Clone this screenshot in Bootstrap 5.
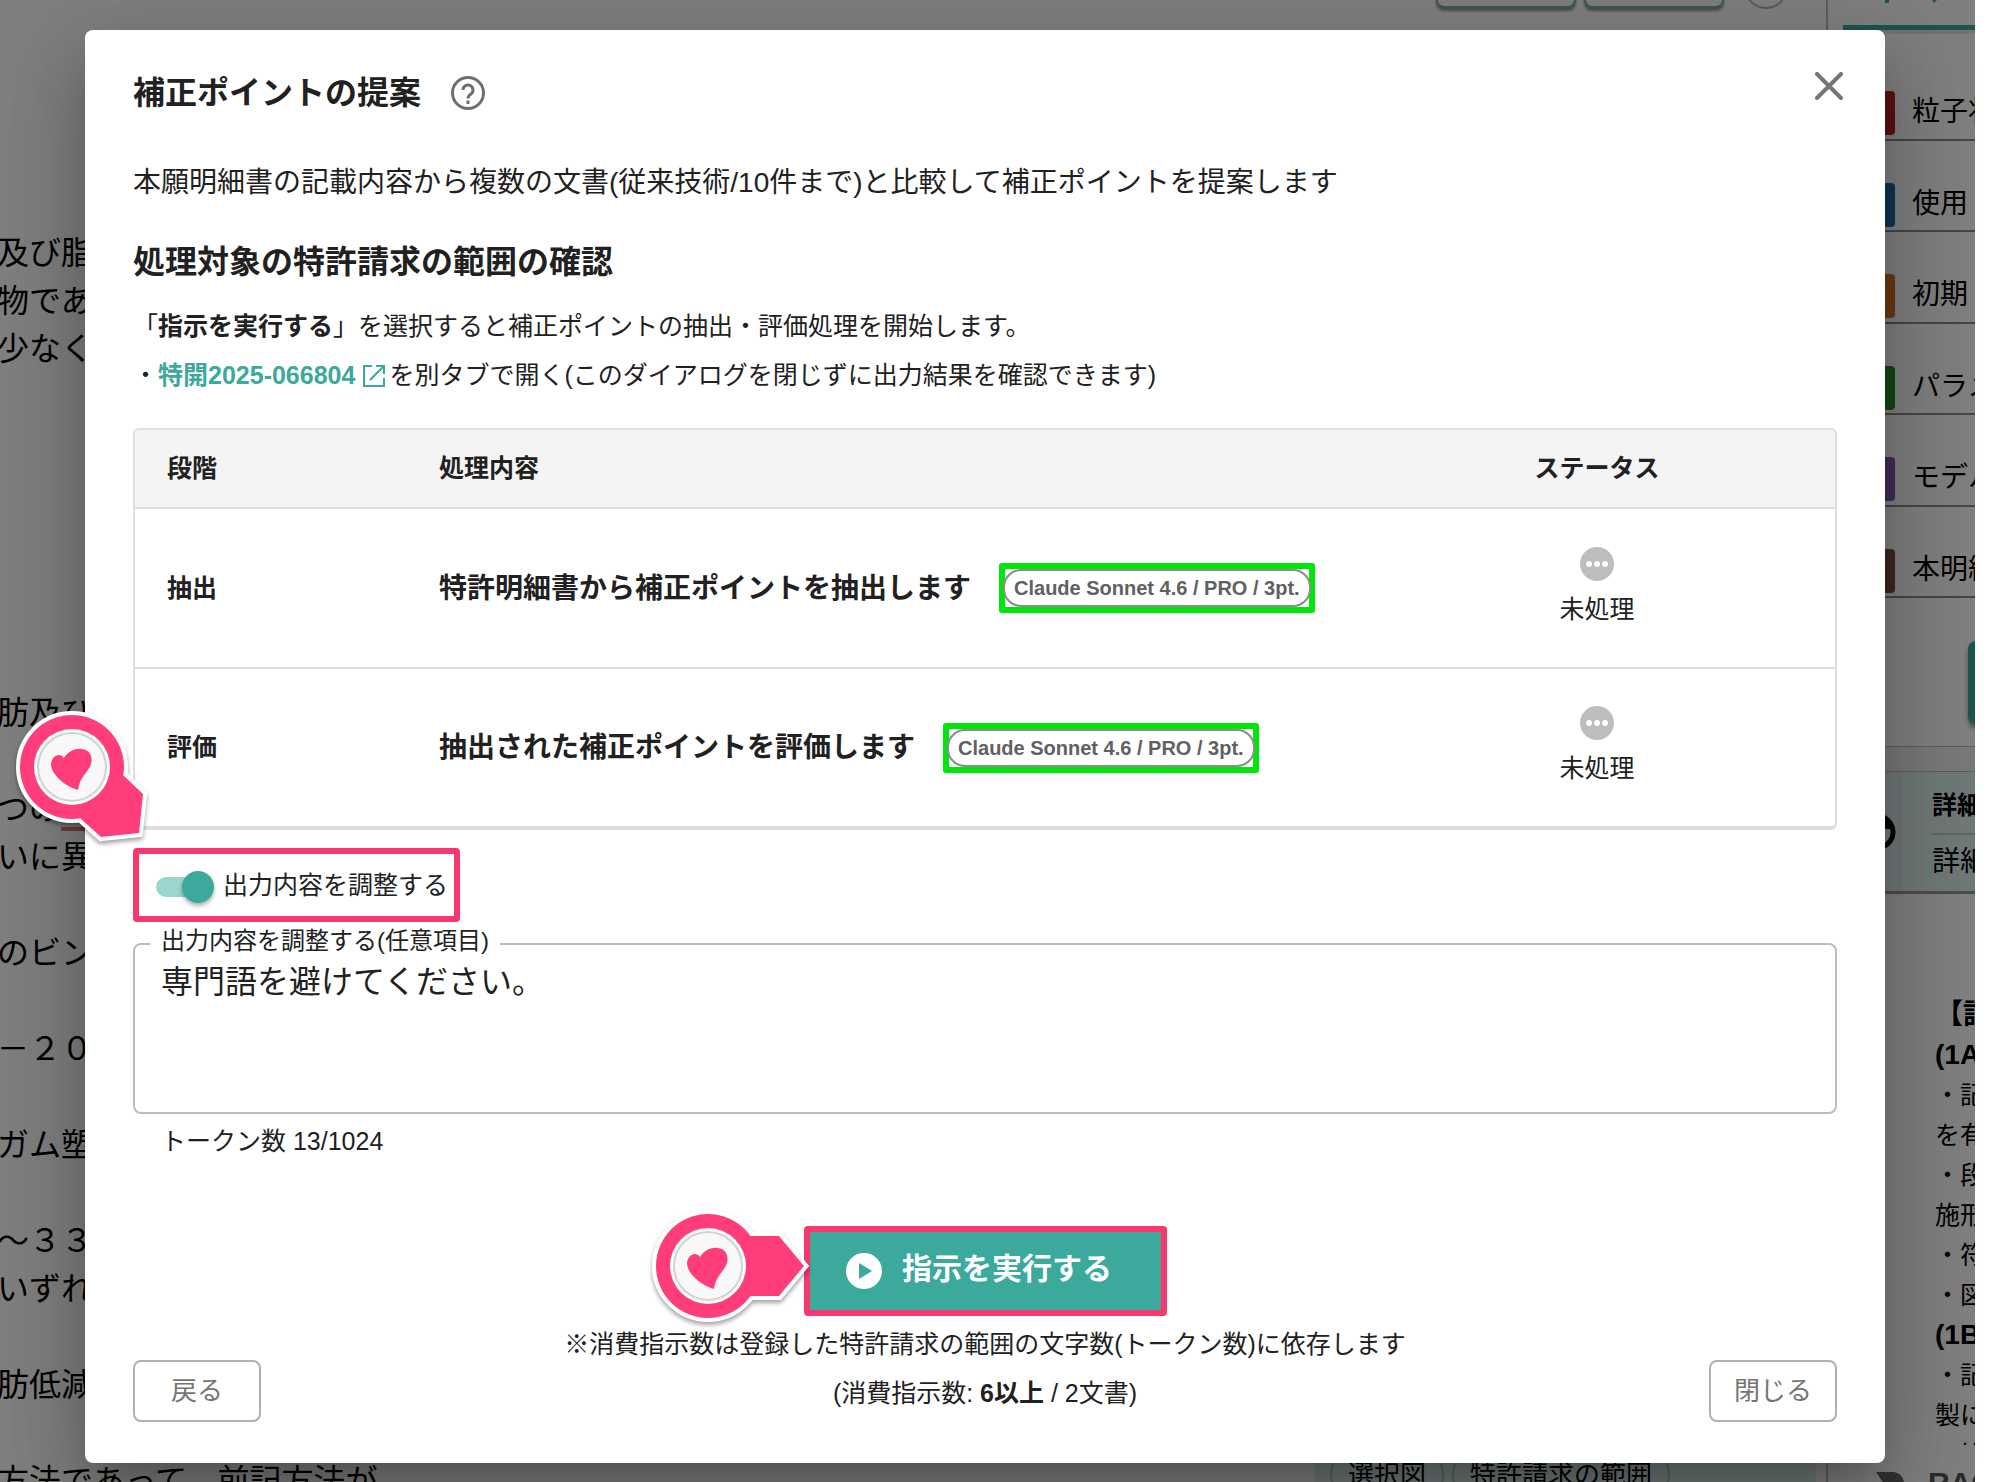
<!DOCTYPE html>
<html lang="ja">
<head>
<meta charset="utf-8">
<meta name="viewport" content="width=device-width, initial-scale=1">
<title>補正ポイントの提案</title>
<link rel="stylesheet" href="https://cdn.jsdelivr.net/npm/bootstrap@5.3.0/dist/css/bootstrap.min.css">
<style>
:root { --teal: #3ba99c; --pink: #f8376f; --green: #00e60a; --ink: #212121; --line: #dedede; }
body { background: #fff; color: var(--ink); font-family: "Liberation Sans", "Noto Sans CJK JP", sans-serif; font-size: 25px; line-height: 49px; }
.app-shell { height: 100vh; margin-right: 41px; background: #fff; color: #000; }
.toolbar { height: 30px; padding-right: 38px; }
.tool-btn { width: 140px; height: 38px; margin-top: -30px; border: 2px solid #6fb5ac; border-radius: 8px; background: #fff; box-shadow: 0 3px 3px rgba(0,0,0,.4); }
.tool-round { width: 44px; height: 44px; margin: -35px 0 0 12px; border: 2px solid #b0b0b0; border-radius: 50%; background: #fff; }
.doc-text { font-size: 32px; line-height: 48px; padding-top: 199px; white-space: nowrap; }
.doc-text p { margin: 0 0 0 -3px; }
.gap-s { margin-top: 48px !important; }
.gap-m { margin-top: 316px !important; }
.red-line { border-bottom: 4px solid #d98080; }
.tag-panel { width: 502px; height: 52px; margin: 0 10px -19px 0; padding: 0 16px; background: #dff2f0; }
.tag-pill { font-size: 26px; line-height: 48px; border: 2px solid #b8c4c3; border-radius: 26px; padding: 0 16px; white-space: nowrap; }
.side-pane { width: 149px; border-left: 2px solid #bbb; white-space: nowrap; }
.tab-head { height: 34px; margin-left: 15px; border-bottom: 4px solid #e4e4e8; }
.tab-head div { height: 30px; border-bottom: 5px solid var(--teal); }
.key-list { height: 564px; padding-top: 15px; }
.key-row { border-bottom: 2px solid #8a8a8a; font-size: 28px; }
.key-row i { width: 24px; height: 44px; margin: 42px 17px 0 43px; border-radius: 4px; flex-shrink: 0; }
.key-row span { padding-top: 38px; }
.side-action { width: 60px; height: 83px; margin: 43px 0 22px 140px; border-radius: 8px; background: var(--teal); box-shadow: 0 4px 5px rgba(0,0,0,.4); }
.side-band { height: 25px; border-top: 1px solid #bbb; background: #f3f3f3; }
.side-card { height: 123px; border-top: 1px solid #bbb; border-bottom: 3px solid #999; background: #dff2f0; padding-left: 30px; }
.side-card b { font-size: 25px; line-height: 56px; padding-top: 2px; border-bottom: 2px solid #bcc8c6; }
.side-card span { font-size: 28px; line-height: 54px; }
.side-note { height: 551px; margin-left: 107px; padding-top: 101px; line-height: 40px; }
.side-note b { font-size: 28px; }
.side-foot { color: #555; font-size: 30px; line-height: 30px; padding: 23px 0 0 48px; }
.scrim { inset: 0 41px 0 0; padding: 30px 90px 20px 85px; background: rgba(0,0,0,.5); }
.dialog-box { background: #fff; border-radius: 8px; padding: 39px 48px 41px; box-shadow: 0 22px 30px -14px rgba(0,0,0,.2), 0 48px 76px 6px rgba(0,0,0,.14), 0 18px 92px 16px rgba(0,0,0,.12); }
.dialog-box h1, .dialog-box h2 { font-size: 32px; line-height: 48px; font-weight: 700; margin: 0; }
.intro { font-size: 28px; line-height: 48px; margin: 42px 0 31px; }
.x-btn { right: 42px; top: 42px; line-height: 0; }
.doc-link { color: var(--teal); font-weight: 700; text-decoration: none; }
.step-card { border: 2px solid var(--line); border-bottom-width: 4px; border-radius: 6px; }
.step-table { table-layout: fixed; color: var(--ink); --bs-table-bg: transparent; }
.step-table th, .step-table td { padding: 0 32px; vertical-align: middle; border-bottom: 2px solid var(--line); }
.step-table thead th { height: 78px; background: #f4f4f4; }
.step-table tbody tr > * { height: 160px; }
.step-table tbody tr:last-child > * { border-bottom: 0; height: 158px; }
.step-name { font-size: 28px; font-weight: 700; }
.mark-green { border: 6px solid var(--green); border-radius: 3px; margin-left: 28px; }
.model-chip { border: 2px solid #8c8c8c; border-radius: 18px; margin: 0 -2px; padding: 0 9px; font-size: 20px; line-height: 34px; font-weight: 700; color: #616161; white-space: nowrap; }
.mark-pink { border: 6px solid var(--pink); border-radius: 4px; }
.switch-box { height: 74px; margin-top: 18px; padding: 0 6px 0 17px; }
.slide-switch { appearance: none; width: 58px; height: 32px; margin: 4px 9px 0 0; background: linear-gradient(#9dd4cd, #9dd4cd) 0 50% / 46px 20px no-repeat; border-radius: 16px; position: relative; }
.slide-switch::before { content: ""; position: absolute; left: 0; top: 6px; width: 46px; height: 20px; border-radius: 10px; background: #9dd4cd; }
.slide-switch { background: none; }
.slide-switch::after { content: ""; position: absolute; right: 0; top: 0; width: 32px; height: 32px; border-radius: 50%; background: var(--teal); box-shadow: 0 3px 4px rgba(0,0,0,.3); }
.note-field { margin-top: 21px; }
.note-field label { left: 17px; top: -16px; padding: 0 11px; background: #fff; font-size: 24px; line-height: 28px; }
.note-field textarea { height: 171px; border: 2px solid #bdbdbd; border-radius: 8px; padding: 14px 26px; font-size: 32px; line-height: 46px; color: var(--ink); resize: none; }
.helper { margin: 3px 28px 60px; }
.run-btn { height: 78px; width: 351px; border: 0; border-radius: 0; background: var(--teal); color: #fff; font-size: 30px; font-weight: 700; line-height: 48px; }
.plain-btn { width: 128px; height: 62px; border: 2px solid #b0b0b0; border-radius: 8px; background: #fff; color: #757575; font-size: 26px; padding: 0; line-height: 48px; }
.pin { pointer-events: none; filter: drop-shadow(0 3px 2px rgba(0,0,0,.35)); }
.pin-switch { left: -127px; top: -147px; }
.pin-run { left: -162px; top: -26px; }
</style>
<script src="https://cdn.jsdelivr.net/npm/bootstrap@5.3.0/dist/js/bootstrap.bundle.min.js"></script>
</head>
<body>
<svg width="0" height="0" class="position-absolute" aria-hidden="true">
  <defs>
    <g id="pin-face">
      <circle cx="60" cy="60" r="38" fill="#fff"/>
      <circle cx="60" cy="60" r="34" fill="#f8f8f8" stroke="#d2d2d2" stroke-width="2"/>
      <path d="M66 83C55 80 40 69 39 58C39 51 45 46 50 49C52 50 52 52 51 53C54 46 62 41 70 42C78 43 81 50 79 57C76 66 68 69 66 83Z" fill="#ff3d7a"/>
    </g>
    <g id="more-dot">
      <circle cx="17" cy="17" r="17" fill="#bdbdbd"/>
      <g fill="#fff"><circle cx="9" cy="17" r="3"/><circle cx="17" cy="17" r="3"/><circle cx="25" cy="17" r="3"/></g>
    </g>
  </defs>
</svg>

<div class="app-shell d-flex overflow-hidden" aria-hidden="true">
  <main class="d-flex flex-column flex-grow-1 overflow-hidden">
    <div class="toolbar d-flex justify-content-end gap-2 flex-shrink-0">
      <div class="tool-btn"></div><div class="tool-btn"></div><div class="tool-round"></div>
    </div>
    <div class="d-flex flex-grow-1 overflow-hidden">
      <article class="doc-text flex-grow-1">
        <p>及び脂</p><p>物であ</p><p>少なく</p>
        <p class="gap-m">肪及び</p>
        <p class="gap-s">つの<span class="red-line">油</span></p><p>いに異</p>
        <p class="gap-s">のビン</p>
        <p class="gap-s">－２０</p>
        <p class="gap-s">ガム塑</p>
        <p class="gap-s">～３３</p><p>いずれ</p>
        <p class="gap-s">肪低減</p>
        <p class="gap-s">方法であって、前記方法が</p>
      </article>
      <div class="tag-panel d-flex align-items-center align-self-end gap-2 flex-shrink-0">
        <span class="tag-pill">選択図</span><span class="tag-pill">特許請求の範囲</span>
      </div>
    </div>
  </main>
  <aside class="side-pane flex-shrink-0 overflow-hidden">
    <div class="tab-head"><div><svg class="d-block" width="110" height="4"><path d="M42 0h4v3h-4zM89 0h5l-3 3z" fill="#3ba99c"/></svg></div></div>
    <div class="key-list d-flex flex-column">
      <div class="key-row d-flex flex-fill"><i style="background:#b9252d"></i><span>粒子状</span></div>
      <div class="key-row d-flex flex-fill"><i style="background:#1f6ba5"></i><span>使用</span></div>
      <div class="key-row d-flex flex-fill"><i style="background:#d9701a"></i><span>初期</span></div>
      <div class="key-row d-flex flex-fill"><i style="background:#2a902a"></i><span>パラメ</span></div>
      <div class="key-row d-flex flex-fill"><i style="background:#8558b0"></i><span>モデル</span></div>
      <div class="key-row d-flex flex-fill"><i style="background:#7e4c42"></i><span>本明細</span></div>
    </div>
    <div class="side-action"></div>
    <div class="side-band"></div>
    <div class="side-card d-flex align-items-center">
      <svg class="flex-shrink-0 me-4" width="38" height="38"><circle cx="19" cy="19" r="16" fill="none" stroke="#000" stroke-width="5"/><path d="M4 16A16 16 0 0 1 34 16Z"/></svg>
      <div class="d-flex flex-column ms-2 ps-1"><b>詳細な</b><span>詳細な</span></div>
    </div>
    <div class="side-note overflow-hidden">
      <div><b>【記</b></div><div><b>(1A)</b></div>
      <div>・記載</div><div>を有す</div><div>・段落</div><div>施形態</div><div>・符号</div><div>・図面</div>
      <div><b>(1B)</b></div><div>・記載</div><div>製に係</div><div>・符号</div>
    </div>
    <div class="side-foot d-flex"><svg width="28" height="30" class="me-4 flex-shrink-0"><path d="M0 4h18q10 2 10 12v14H8V16Z" fill="#666"/></svg><b>RAG</b></div>
  </aside>
</div>

<div class="scrim position-absolute">
  <section class="dialog-box position-relative" role="dialog" aria-labelledby="dlg-title">
    <button type="button" class="x-btn btn p-0 border-0 position-absolute" aria-label="閉じる">
      <svg width="28" height="28" viewBox="0 0 28 28" stroke="#757575" stroke-width="4" stroke-linecap="round"><path d="M2 2L26 26M26 2L2 26"/></svg>
    </button>
    <div class="d-flex align-items-center">
      <h1 id="dlg-title">補正ポイントの提案</h1>
      <svg class="ms-4 ps-1" width="42" height="38" viewBox="0 0 38 38" fill="none" stroke="#6f6f6f" stroke-width="3"><circle cx="19" cy="19" r="15.5"/><path d="M14 16A5 5 0 1 1 22 20Q19 22 19 24.500"/><path d="M19 26.500v3.500"/></svg>
    </div>
    <p class="intro">本願明細書の記載内容から複数の文書(従来技術/10件まで)と比較して補正ポイントを提案します</p>
    <h2>処理対象の特許請求の範囲の確認</h2>
    <div class="mt-3">「<b>指示を実行する</b>」を選択すると補正ポイントの抽出・評価処理を開始します。</div>
    <div class="d-flex align-items-center mb-4 pb-1">
      <span>・</span>
      <a class="doc-link d-flex align-items-center" href="#">特開2025-066804
        <svg class="ms-2 me-1" width="22" height="22" viewBox="0 0 22 22" fill="none" stroke="#3ba99c" stroke-width="2"><path d="M9 1H1V21H21V13M13 1H21V9M21 1L7 15"/></svg></a>
      <span>を別タブで開く(このダイアログを閉じずに出力結果を確認できます)</span>
    </div>

    <div class="step-card overflow-hidden">
      <table class="step-table table mb-0">
        <colgroup><col style="width:16%"><col style="width:56%"><col style="width:28%"></colgroup>
        <thead><tr><th scope="col">段階</th><th scope="col">処理内容</th><th scope="col" class="text-center">ステータス</th></tr></thead>
        <tbody>
          <tr>
            <th scope="row">抽出</th>
            <td><div class="d-flex align-items-center"><span class="step-name">特許明細書から補正ポイントを抽出します</span><span class="mark-green d-flex"><span class="model-chip">Claude Sonnet 4.6 / PRO / 3pt.</span></span></div></td>
            <td><div class="d-flex flex-column align-items-center"><svg width="34" height="34" class="my-1"><use href="#more-dot"/></svg><span>未処理</span></div></td>
          </tr>
          <tr>
            <th scope="row">評価</th>
            <td><div class="d-flex align-items-center"><span class="step-name">抽出された補正ポイントを評価します</span><span class="mark-green d-flex"><span class="model-chip">Claude Sonnet 4.6 / PRO / 3pt.</span></span></div></td>
            <td><div class="d-flex flex-column align-items-center"><svg width="34" height="34" class="my-1"><use href="#more-dot"/></svg><span>未処理</span></div></td>
          </tr>
        </tbody>
      </table>
    </div>

    <div class="switch-box mark-pink d-inline-flex align-items-center position-relative">
      <svg class="pin pin-switch position-absolute" width="140" height="140" viewBox="0 0 140 140">
        <g fill="#ff3d7a" stroke="#fff" stroke-width="8" stroke-linejoin="miter"><circle cx="60" cy="60" r="52"/><path d="M112 69L131 87L127 126L89 130L69 112Z"/></g>
        <circle cx="60" cy="60" r="52" fill="#ff3d7a"/><path d="M112 69L131 87L127 126L89 130L69 112L80 70Z" fill="#ff3d7a"/>
        <use href="#pin-face"/>
      </svg>
      <input class="slide-switch flex-shrink-0" type="checkbox" role="switch" id="adjust" checked>
      <label for="adjust">出力内容を調整する</label>
    </div>

    <div class="note-field position-relative">
      <label for="note" class="position-absolute">出力内容を調整する(任意項目)</label>
      <textarea id="note" class="d-block w-100">専門語を避けてください。</textarea>
    </div>
    <div class="helper">トークン数 13/1024</div>

    <div class="d-flex justify-content-between align-items-end">
      <button type="button" class="plain-btn btn">戻る</button>
      <div class="d-flex flex-column align-items-center pb-1">
        <div class="mark-pink position-relative mb-1">
          <button type="button" class="run-btn btn d-flex align-items-center justify-content-center pe-4">
            <svg width="36" height="36" viewBox="0 0 36 36" class="me-3"><circle cx="18" cy="18" r="18" fill="#fff"/><path d="M13 10L26 18L13 26Z" fill="#3ba99c"/></svg><span class="ms-1 mb-1">指示を実行する</span>
          </button>
          <svg class="pin pin-run position-absolute" width="164" height="124" viewBox="0 0 164 124">
            <g fill="#ff3d7a" stroke="#fff" stroke-width="8"><circle cx="60" cy="60" r="52"/><path d="M102 30H131L156 60L131 90H102Z"/></g>
            <circle cx="60" cy="60" r="52" fill="#ff3d7a"/><path d="M90 30H131L156 60L131 90H90Z" fill="#ff3d7a"/>
            <use href="#pin-face"/>
          </svg>
        </div>
        <div>※消費指示数は登録した特許請求の範囲の文字数(トークン数)に依存します</div>
        <div>(消費指示数: <b>6以上</b> / 2文書)</div>
      </div>
      <button type="button" class="plain-btn btn">閉じる</button>
    </div>
  </section>
</div>
</body>
</html>
